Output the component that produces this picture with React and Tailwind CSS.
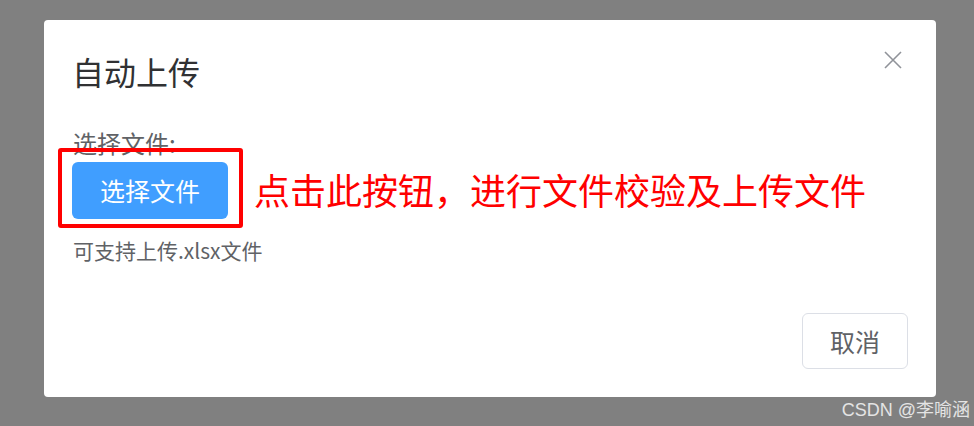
import React from 'react';

const font = { fontFamily: '"Noto Sans CJK SC", "Noto Sans", sans-serif' };

const App = () => {
  return (
    <div
      className="relative w-[974px] h-[426px] overflow-hidden bg-[#808080] pt-[20px] pl-[44px]"
      style={font}
    >
      <div className="relative flex flex-col w-[892px] h-[377px] bg-white rounded-[4px] px-[28px]">
        <div className="pt-[33px]">
          <h2 className="text-[32px] leading-[36px] text-[#303133]">自动上传</h2>
        </div>
        <button className="absolute top-[31px] right-[34px] w-[18px] h-[18px] text-[#909399]" aria-label="close">
          <svg viewBox="0 0 18 18" className="w-[18px] h-[18px]" fill="none" stroke="currentColor" strokeWidth="1.6">
            <path d="M1 1 L17 17 M17 1 L1 17" />
          </svg>
        </button>

        <div className="mt-[42px] text-[24px] leading-[24px] text-[#606266] pl-[1px]">选择文件:</div>

        <div className="flex items-center mt-[7px]">
          <div className="relative">
            <button className="w-[156px] h-[57px] rounded-[6px] bg-[#409eff] text-white text-[25px] leading-[25px]">
              选择文件
            </button>
            <div className="absolute -left-[14px] -top-[14px] -right-[15px] -bottom-[9px] border-[4px] border-[#ff0000] rounded-[3px]"></div>
          </div>
          <span className="ml-[26px] text-[36px] leading-[40px] text-[#ff0000] -mt-[4px]">
            点击此按钮，进行文件校验及上传文件
          </span>
        </div>

        <div className="mt-[19px] text-[21px] leading-[24px] text-[#606266] pl-[1px]">可支持上传.xlsx文件</div>

        <div className="mt-auto mb-[28px] flex justify-end">
          <button className="w-[106px] h-[56px] rounded-[6px] border border-[#dcdfe6] bg-white text-[25px] leading-[25px] text-[#606266]">
            取消
          </button>
        </div>
      </div>

      <div
        className="absolute right-[4px] bottom-[6px] text-[18px] leading-[20px] text-[#e4e4e4]"
        style={{ fontFamily: '"Liberation Sans", "Noto Sans CJK SC", sans-serif' }}
      >
        CSDN @李喻涵
      </div>
    </div>
  );
};

export default App;
